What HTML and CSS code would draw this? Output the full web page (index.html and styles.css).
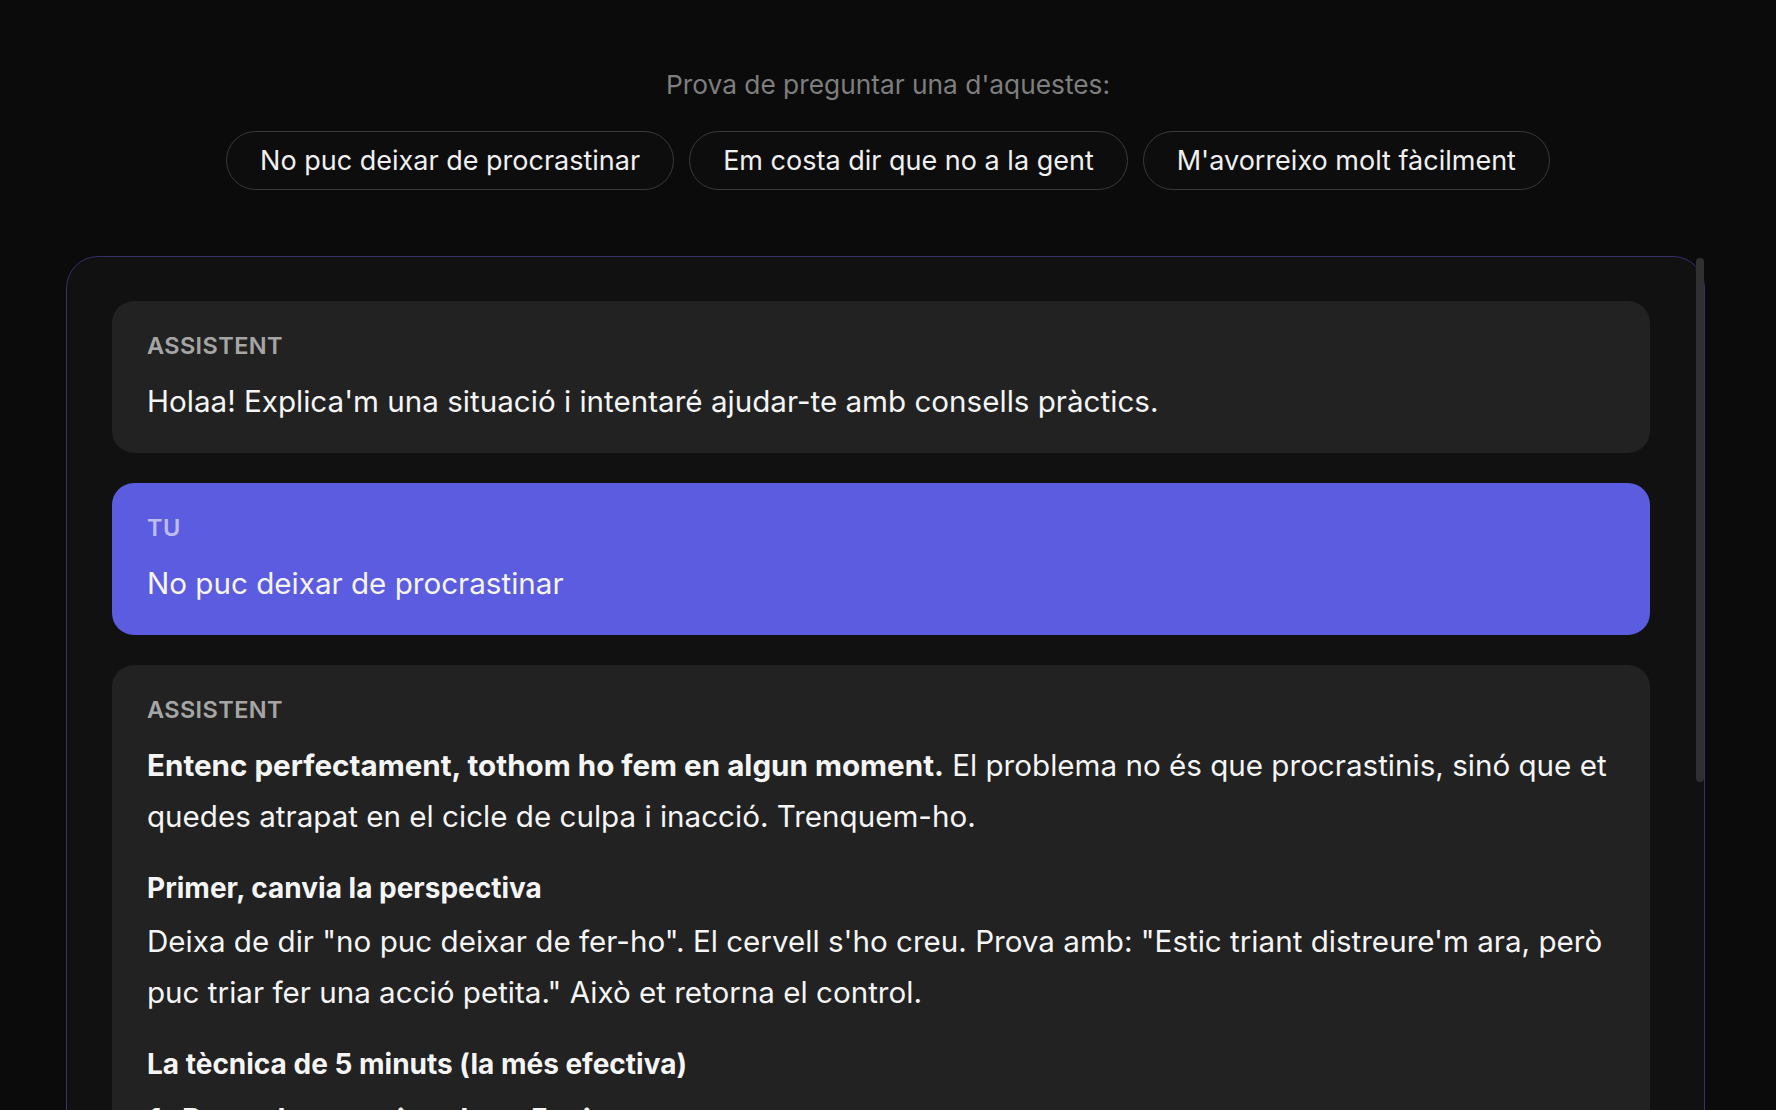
FILE: index.html
```html
<!DOCTYPE html>
<html lang="ca">
<head>
<meta charset="utf-8">
<title>Assistent</title>
<link rel="stylesheet" href="styles.css">
</head>
<body>
<main class="page">
  <section class="suggestions">
    <p class="suggestions-title">Prova de preguntar una d'aquestes:</p>
    <div class="chips">
      <button class="chip">No puc deixar de procrastinar</button>
      <button class="chip">Em costa dir que no a la gent</button>
      <button class="chip">M'avorreixo molt fàcilment</button>
    </div>
  </section>

  <section class="chat">
    <div class="chat-scroll">
      <article class="msg msg-assistant">
        <div class="msg-label">Assistent</div>
        <div class="msg-body">
          <p>Holaa! Explica'm una situació i intentaré ajudar-te amb consells pràctics.</p>
        </div>
      </article>

      <article class="msg msg-user">
        <div class="msg-label">Tu</div>
        <div class="msg-body">
          <p>No puc deixar de procrastinar</p>
        </div>
      </article>

      <article class="msg msg-assistant">
        <div class="msg-label">Assistent</div>
        <div class="msg-body rich">
          <p><strong>Entenc perfectament, tothom ho fem en algun moment.</strong> El problema no és que procrastinis, sinó que et quedes atrapat en el cicle de culpa i inacció. Trenquem-ho.</p>
          <h3>Primer, canvia la perspectiva</h3>
          <p>Deixa de dir "no puc deixar de fer-ho". El cervell s'ho creu. Prova amb: "Estic triant distreure'm ara, però puc triar fer una acció petita." Això et retorna el control.</p>
          <h3>La tècnica de 5 minuts (la més efectiva)</h3>
          <ol>
            <li><strong>Posa el temporitzador a 5 minuts</strong></li>
            <li><strong>Comença per la part més fàcil</strong></li>
          </ol>
        </div>
      </article>
    </div>
    <div class="scroll-thumb"></div>
  </section>
</main>
</body>
</html>
```

FILE: styles.css
```css
* {
  box-sizing: border-box;
}

html, body {
  margin: 0;
  height: 1110px;
  overflow: hidden;
  background: #0b0b0b;
}

body {
  font-family: Inter, "Noto Sans", "DejaVu Sans", sans-serif;
  color: #f2f2f2;
}

.page {
  padding-top: 68px;
}

.suggestions {
  display: flex;
  flex-direction: column;
  align-items: center;
}

.suggestions-title {
  margin: 0;
  font-size: 26.3px;
  line-height: 34px;
  color: #7e7e7e;
}

.chips {
  display: flex;
  gap: 15px;
  margin-top: 29px;
}

.chip {
  height: 59px;
  padding: 0 33px;
  border: 1.5px solid #3a3a3a;
  border-radius: 30px;
  background: #0d0d0d;
  color: #f0f0f0;
  font-family: inherit;
  font-size: 27px;
  display: flex;
  align-items: center;
}

.chat {
  position: relative;
  width: 1639px;
  height: 1000px;
  margin: 66px 0 0 66px;
  border: 1.5px solid #34306c;
  border-radius: 32px;
  background: #111111;
}

.chat-scroll {
  height: 100%;
  overflow: hidden;
  border-radius: 32px;
  padding: 44px 54px 0 45px;
  display: flex;
  flex-direction: column;
  gap: 30px;
}

.scroll-thumb {
  position: absolute;
  top: 1px;
  right: 0;
  width: 8px;
  height: 524px;
  border-radius: 4px;
  background: #303030;
}

.msg {
  border-radius: 22px;
  padding: 31px 35px 26px;
  flex-shrink: 0;
}

.msg-assistant {
  background: #222222;
}

.msg-user {
  background: #5c5ce0;
}

.msg-label {
  font-size: 23.5px;
  line-height: 28px;
  font-weight: 600;
  text-transform: uppercase;
  letter-spacing: 0.4px;
  color: rgba(255, 255, 255, 0.62);
}

.msg-body {
  margin-top: 16px;
  font-size: 29.6px;
  line-height: 51px;
  color: #f5f5f5;
}

.msg-body p {
  margin: 0;
}

.msg-body strong {
  font-weight: 700;
}

.msg-body h3 {
  margin: 28px 0 10px;
  font-size: 28px;
  line-height: 36px;
  font-weight: 700;
}

.msg-body ol {
  margin: 19px 0 0;
  padding: 0;
  list-style-position: inside;
  font-weight: 700;
  line-height: 36px;
}
```
